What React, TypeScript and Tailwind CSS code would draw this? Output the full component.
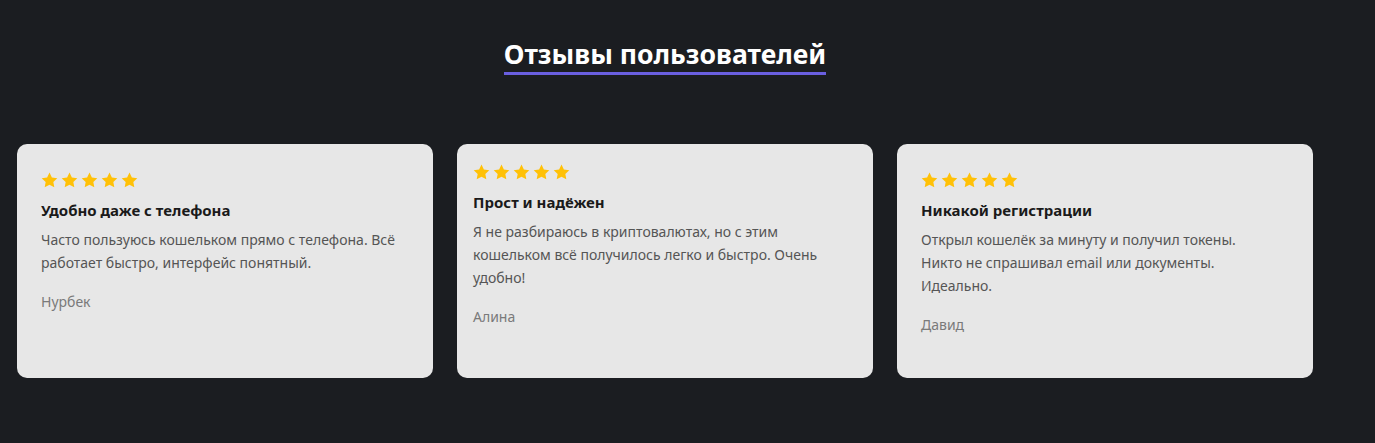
import React from "react";

const Star = () => (
  <svg width="17" height="16" viewBox="0 0 24 23" className="block">
    <path
      d="M12 0.8l3.4 7.1 7.8 1.1-5.7 5.4 1.4 7.7L12 18.4l-6.9 3.7 1.4-7.7L0.8 9l7.8-1.1z"
      fill="#ffc107"
    />
  </svg>
);

const Stars = () => (
  <div className="flex gap-[3px]">
    {[0, 1, 2, 3, 4].map((i) => (
      <Star key={i} />
    ))}
  </div>
);

type Review = { title: string; body: React.ReactNode; author: string; tight?: boolean };

const reviews: Review[] = [
  {
    title: "Удобно даже с телефона",
    body: "Часто пользуюсь кошельком прямо с телефона. Всё работает быстро, интерфейс понятный.",
    author: "Нурбек",
  },
  {
    title: "Прост и надёжен",
    body: "Я не разбираюсь в криптовалютах, но с этим кошельком всё получилось легко и быстро. Очень удобно!",
    author: "Алина",
    tight: true,
  },
  {
    title: "Никакой регистрации",
    body: (
      <>
        Открыл кошелёк за минуту и получил токены.
        <br />
        Никто не спрашивал email или документы.
        <br />
        Идеально.
      </>
    ),
    author: "Давид",
  },
];

export default function App() {
  return (
    <div
      className="w-full h-[443px] bg-[#1b1d21] overflow-hidden"
      style={{ fontFamily: '"Noto Sans", "Open Sans", sans-serif' }}
    >
      <div className="w-[1296px] ml-[17px] pt-[36px]">
        <div className="flex justify-center">
          <h2 className="text-[26.6px] leading-[36px] font-bold text-white border-b-[3px] border-[#6a5fe0]">
            Отзывы пользователей
          </h2>
        </div>
        <div className="grid grid-cols-3 gap-[24px] mt-[69px]">
          {reviews.map((r) => (
            <div
              key={r.author}
              className={
                "h-[234px] bg-[#e7e7e7] rounded-[10px] " +
                (r.tight ? "px-[16px] pt-[20px]" : "px-[24px] pt-[28px]")
              }
            >
              <Stars />
              <div className="mt-[12px] text-[15px] leading-[20px] font-bold text-[#1a1a1a]">
                {r.title}
              </div>
              <p className="mt-[8px] text-[14px] leading-[23px] text-[#555555] pr-[8px]">
                {r.body}
              </p>
              <div className="mt-[18px] text-[14px] leading-[20px] text-[#7a7a7a]">
                {r.author}
              </div>
            </div>
          ))}
        </div>
      </div>
    </div>
  );
}
